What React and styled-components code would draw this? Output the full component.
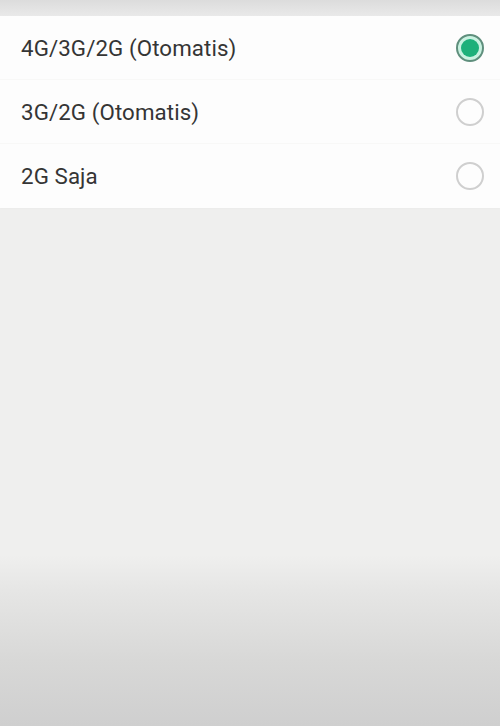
import React, { useState } from 'react';
import styled, { createGlobalStyle } from 'styled-components';

const GlobalStyle = createGlobalStyle`
  html, body {
    margin: 0;
    padding: 0;
  }
  body {
    font-family: Roboto, "Noto Sans", "Liberation Sans", sans-serif;
    background: #efefef;
  }
`;

const Screen = styled.div`
  width: 500px;
  height: 726px;
  display: flex;
  flex-direction: column;
  overflow: hidden;
  background: linear-gradient(
    to bottom,
    #efefee 0px,
    #efefee 555px,
    #e6e6e5 590px,
    #d8d8d7 660px,
    #cfcfcf 726px
  );
`;

const TopBar = styled.div`
  height: 16px;
  flex: none;
  background: linear-gradient(to bottom, #dcdcdc, #e9e9e9);
`;

const List = styled.div`
  flex: none;
  background: #fdfdfd;
  box-shadow: 0 1px 2px rgba(0, 0, 0, 0.02);
`;

const Row = styled.label`
  height: 64px;
  display: flex;
  align-items: center;
  justify-content: space-between;
  padding: 0 16px 0 21px;
  cursor: pointer;
  border-bottom: ${props => (props.last ? 'none' : '1px solid #f8f8f7')};
  box-sizing: border-box;
`;

const Label = styled.span`
  font-size: 22.3px;
  color: #353535;
  letter-spacing: 0.1px;
`;

const Radio = styled.span`
  width: 28px;
  height: 28px;
  box-sizing: border-box;
  border-radius: 50%;
  display: flex;
  align-items: center;
  justify-content: center;
  border: 2px solid ${props => (props.checked ? '#5f8f7d' : '#cfcfcf')};
  background: ${props => (props.checked ? '#c9f2e1' : 'transparent')};
`;

const Dot = styled.span`
  width: 18px;
  height: 18px;
  border-radius: 50%;
  background: #1db07a;
`;

const options = ['4G/3G/2G (Otomatis)', '3G/2G (Otomatis)', '2G Saja'];

export default function App() {
  const [selected, setSelected] = useState(0);
  return (
    <>
      <GlobalStyle />
      <Screen>
        <TopBar />
        <List>
          {options.map((opt, i) => (
            <Row key={opt} last={i === options.length - 1} onClick={() => setSelected(i)}>
              <Label>{opt}</Label>
              <Radio checked={selected === i}>{selected === i && <Dot />}</Radio>
            </Row>
          ))}
        </List>
      </Screen>
    </>
  );
}
